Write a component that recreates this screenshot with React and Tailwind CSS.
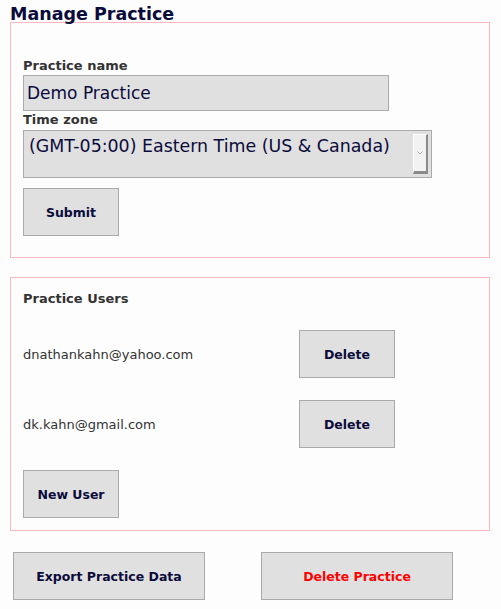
import React from "react";

const font = { fontFamily: '"DejaVu Sans", Verdana, sans-serif' };

function Btn({ children, className = "" }) {
  return (
    <div
      className={
        "flex h-[48px] items-center justify-center border border-[#aaaaaa] bg-[#e0e0e0] pt-[2px] text-[12.5px] font-bold leading-[16px] " +
        className
      }
    >
      {children}
    </div>
  );
}

export default function App() {
  return (
    <div
      className="min-h-[609px] w-full bg-[#fdfdfd] pl-[10px] pt-[6px] text-[#0b0b3b]"
      style={font}
    >
      <h1 className="text-[17.5px] font-bold leading-[16px] text-[#0b0b3b]">Manage Practice</h1>

      <div className="w-[480px] border border-[#ffb6c1] px-[12px] pb-[21px] pt-[35px]">
        <div className="h-[16px] text-[13px] font-bold leading-[16px] text-[#333333]">Practice name</div>
        <div className="mt-[1px] flex h-[36px] w-[366px] items-center border border-[#aaaaaa] bg-[#e0e0e0] pl-[3px] text-[17px] leading-[20px] text-[#0b0b3b]">
          Demo Practice
        </div>
        <div className="mt-[1px] h-[16px] text-[13px] font-bold leading-[16px] text-[#333333]">Time zone</div>
        <div className="mt-[2px] flex h-[48px] w-[409px] border border-[#aaaaaa] bg-[#e0e0e0]">
          <div className="flex-1 pl-[5px] pt-[5px] text-[17.4px] leading-[20px] text-[#0b0b3b]">
            (GMT-05:00) Eastern Time (US &amp; Canada)
          </div>
          <div className="my-[3px] mr-[3px] flex w-[15px] items-center justify-center border-l border-t border-l-white border-t-white border-b-[3px] border-r-[2px] border-b-[#8a8a8a] border-r-[#8a8a8a] bg-[#f2f2f2]">
            <svg width="6" height="4" viewBox="0 0 6 4" className="block">
              <path d="M0.5 0.5 L3 3 L5.5 0.5" fill="none" stroke="#9a9a9a" strokeWidth="0.8" />
            </svg>
          </div>
        </div>
        <Btn className="mt-[10px] w-[96px]">Submit</Btn>
      </div>

      <div className="mt-[19px] w-[480px] border border-[#ffb6c1] px-[12px] pb-[12px] pt-[13px]">
        <div className="h-[16px] text-[13px] font-bold leading-[16px] text-[#333333]">Practice Users</div>
        <div className="mt-[23px] flex items-center">
          <div className="w-[276px] pt-[2px] text-[13px] leading-[16px] text-[#333333]">dnathankahn@yahoo.com</div>
          <Btn className="w-[96px]">Delete</Btn>
        </div>
        <div className="mt-[22px] flex items-center">
          <div className="w-[276px] pt-[2px] text-[13px] leading-[16px] text-[#333333]">dk.kahn@gmail.com</div>
          <Btn className="w-[96px]">Delete</Btn>
        </div>
        <Btn className="mt-[22px] w-[96px]">New User</Btn>
      </div>

      <div className="ml-[3px] mt-[21px] flex gap-[56px]">
        <Btn className="w-[192px]">Export Practice Data</Btn>
        <Btn className="w-[192px] text-[#ff0000]">Delete Practice</Btn>
      </div>
    </div>
  );
}
